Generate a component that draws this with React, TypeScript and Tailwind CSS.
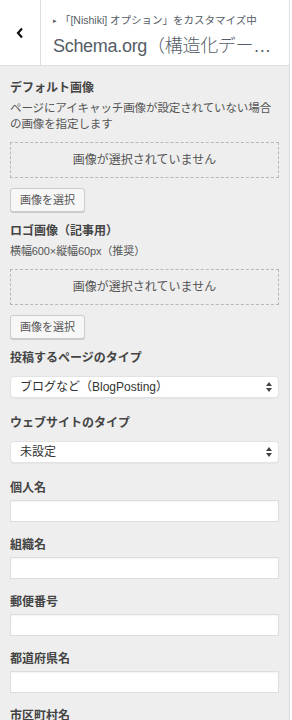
import React from "react";

const jp = "font-['Liberation_Sans','Noto_Sans_CJK_JP',sans-serif]";

function Label({ children }: { children: React.ReactNode }) {
  return (
    <div className="text-[12px] font-bold leading-[16px] text-[#444]">
      {children}
    </div>
  );
}

function ImageField({
  title,
  note,
}: {
  title: string;
  note: React.ReactNode;
}) {
  return (
    <div className="mb-[11px]">
      <Label>{title}</Label>
      <div className="mt-[4px] whitespace-nowrap text-[11.5px] leading-[16px] tracking-[-0.1px] text-[#555]">{note}</div>
      <div className="mt-[10px] flex h-[36px] items-center justify-center border border-dashed border-[#b4b9be] text-[12px] text-[#555]">
        画像が選択されていません
      </div>
      <button className="mt-[10px] h-[24px] rounded-[3px] border border-[#ccc] bg-[#f7f7f7] px-[9px] text-[11px] text-[#555] shadow-[0_1px_0_#ccc]">
        画像を選択
      </button>
    </div>
  );
}

function SelectField({ title, value }: { title: string; value: string }) {
  return (
    <div className="mb-[17px]">
      <Label>{title}</Label>
      <div className="mt-[10px] flex h-[22px] items-center justify-between rounded-[4px] border border-[#e3e3e3] bg-white pl-[9px] pr-[6px] text-[12px] text-[#333] shadow-[0_1px_1px_rgba(0,0,0,0.04)]">
        <span>{value}</span>
        <svg width="6" height="10" viewBox="0 0 6 10">
          <path d="M3 0L6 4H0z M3 10L0 6h6z" fill="#444" />
        </svg>
      </div>
    </div>
  );
}

function TextField({ title }: { title: string }) {
  return (
    <div className="mb-[15px]">
      <Label>{title}</Label>
      <div className="mt-[4px] h-[22px] border border-[#ddd] bg-white shadow-[inset_0_1px_2px_rgba(0,0,0,0.05)]" />
    </div>
  );
}

export default function App() {
  return (
    <div className={`h-[720px] w-[292px] overflow-hidden ${jp}`}>
      <div className="flex h-full w-[290px] flex-col border-r border-[#ddd] bg-[#eee]">
        {/* Header */}
        <div className="flex h-[66px] shrink-0 border-b border-[#ddd] bg-white">
          <div className="flex w-[41px] shrink-0 items-center justify-center border-r border-[#ddd]">
            <svg width="8" height="12" viewBox="0 0 8 12">
              <path d="M6 1.5L2 6l4 4.5" stroke="#111" strokeWidth="2.2" fill="none" />
            </svg>
          </div>
          <div className="min-w-0 flex-1 pl-[12px] pr-[4px] pt-[13px]">
            <div className="whitespace-nowrap text-[10.5px] leading-[14px] text-[#555d66]">
              <span className="text-[7px] align-[1px]">▸</span> 「[Nishiki] オプション」をカスタマイズ中
            </div>
            <div className="mt-[5px] truncate text-[18px] font-light leading-[26px] tracking-[-0.3px] text-[#555d66]">
              Schema.org（構造化データ設定）
            </div>
          </div>
        </div>

        {/* Controls */}
        <div className="px-[10px] pt-[14px]">
          <ImageField
            title="デフォルト画像"
            note={
              <>
                ページにアイキャッチ画像が設定されていない場合
                <br />
                の画像を指定します
              </>
            }
          />
          <ImageField title="ロゴ画像（記事用）" note={<span className="text-[11px]">横幅600×縦幅60px（推奨）</span>} />
          <SelectField title="投稿するページのタイプ" value="ブログなど（BlogPosting）" />
          <SelectField title="ウェブサイトのタイプ" value="未設定" />
          <TextField title="個人名" />
          <TextField title="組織名" />
          <TextField title="郵便番号" />
          <TextField title="都道府県名" />
          <TextField title="市区町村名" />
        </div>
      </div>
    </div>
  );
}
